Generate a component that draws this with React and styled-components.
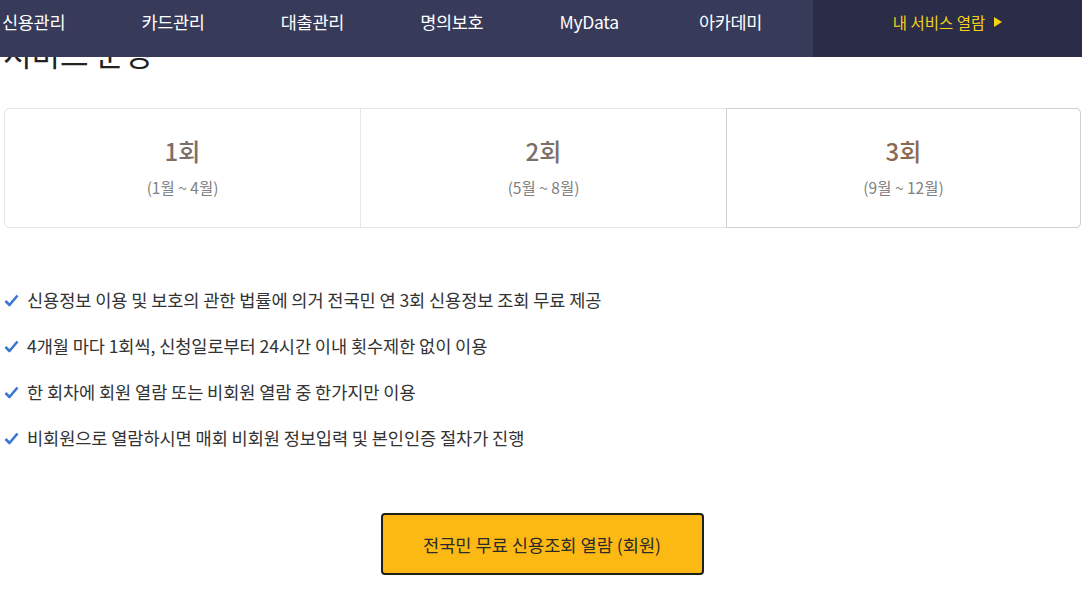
import React from "react";
import styled, { createGlobalStyle } from "styled-components";

const Global = createGlobalStyle`
  html, body { margin: 0; padding: 0; background: #fff; }
  body { font-family: "Noto Sans CJK KR", "Noto Sans", sans-serif; color: #333; }
  * { box-sizing: border-box; }
`;

const Header = styled.header`
  position: fixed;
  top: 0;
  left: 0;
  right: 0;
  height: 57px;
  display: flex;
  background: #383a5a;
  z-index: 10;
`;

const Nav = styled.nav`
  flex: 1;
  display: grid;
  grid-template-columns: repeat(5, 139.4px) 1fr;
  align-items: start;
  padding-left: 2px;
`;

const NavItem = styled.a`
  display: block;
  margin-top: 10px;
  color: #fff;
  font-size: 17.5px;
  letter-spacing: -0.3px;
  line-height: 24px;
  white-space: nowrap;
  text-decoration: none;
`;

const MyService = styled.a`
  width: 269px;
  display: flex;
  align-items: center;
  justify-content: center;
  gap: 9px;
  background: #2a2c48;
  color: #f6d21c;
  font-size: 15.5px;
  padding-bottom: 14px;
  text-decoration: none;
`;

const Triangle = styled.span`
  width: 0;
  height: 0;
  border-top: 5px solid transparent;
  border-bottom: 5px solid transparent;
  border-left: 8px solid #f6d21c;
  margin-top: 1px;
`;

const Main = styled.main`
  padding: 36px 1px 0 4px;
`;

const Title = styled.h2`
  margin: 0 0 0 -1px;
  font-size: 31px;
  font-weight: 400;
  line-height: 34px;
  color: #222;
`;

const Tabs = styled.div`
  margin-top: 38px;
  display: grid;
  grid-template-columns: 355px 366px 1fr;
  border: 1px solid #e6e6e6;
  border-radius: 5px;
  height: 120px;
`;

const Tab = styled.div`
  display: flex;
  flex-direction: column;
  align-items: center;
  justify-content: center;
  gap: 11px;
  padding-bottom: 4px;
  border-left: ${(p) => (p.$first ? "none" : "1px solid #e6e6e6")};
  ${(p) =>
    p.$active &&
    `
    margin: -1px -1px -1px 0;
    border: 1px solid #cfcfcf;
    border-radius: 0 5px 5px 0;
  `}
`;

const TabTitle = styled.div`
  font-size: 24px;
  font-weight: 500;
  line-height: 30px;
  color: ${(p) => (p.$active ? "#8a6a4e" : "#7b6f69")};
`;

const TabSub = styled.div`
  font-size: 15.5px;
  line-height: 20px;
  color: #7f7f7f;
`;

const List = styled.ul`
  list-style: none;
  margin: 60px 0 0;
  padding: 0;
  display: flex;
  flex-direction: column;
  gap: 22px;
`;

const Item = styled.li`
  display: flex;
  align-items: center;
  gap: 8px;
  font-size: 17.6px;
  line-height: 24px;
  color: #333;
  letter-spacing: -0.1px;
`;

const Check = () => (
  <svg width="15" height="13" viewBox="0 0 15 13" aria-hidden="true">
    <path d="M1.5 7 L5.5 11 L13.5 1.5" fill="none" stroke="#3b77d0" strokeWidth="2.6" strokeLinejoin="round" />
  </svg>
);

const ButtonRow = styled.div`
  display: flex;
  justify-content: center;
  margin-top: 63px;
  padding-right: 1px;
`;

const OpenButton = styled.button`
  width: 323px;
  height: 62px;
  background: #fdb913;
  border: 2px solid #1e1e1e;
  border-radius: 4px;
  font-family: inherit;
  font-size: 17.6px;
  color: #2b2b2b;
  cursor: pointer;
`;

const navItems = ["신용관리", "카드관리", "대출관리", "명의보호", "MyData", "아카데미"];
const tabs = [
  { t: "1회", s: "(1월 ~ 4월)" },
  { t: "2회", s: "(5월 ~ 8월)" },
  { t: "3회", s: "(9월 ~ 12월)", active: true },
];
const items = [
  "신용정보 이용 및 보호의 관한 법률에 의거 전국민 연 3회 신용정보 조회 무료 제공",
  "4개월 마다 1회씩, 신청일로부터 24시간 이내 횟수제한 없이 이용",
  "한 회차에 회원 열람 또는 비회원 열람 중 한가지만 이용",
  "비회원으로 열람하시면 매회 비회원 정보입력 및 본인인증 절차가 진행",
];

export default function App() {
  return (
    <>
      <Global />
      <Header>
        <Nav>
          {navItems.map((n) => (
            <NavItem key={n}>{n}</NavItem>
          ))}
        </Nav>
        <MyService>
          내 서비스 열람 <Triangle />
        </MyService>
      </Header>
      <Main>
        <Title>서비스 운영</Title>
        <Tabs>
          {tabs.map((tab, i) => (
            <Tab key={tab.t} $first={i === 0} $active={tab.active}>
              <TabTitle $active={tab.active}>{tab.t}</TabTitle>
              <TabSub>{tab.s}</TabSub>
            </Tab>
          ))}
        </Tabs>
        <List>
          {items.map((it) => (
            <Item key={it}>
              <Check />
              {it}
            </Item>
          ))}
        </List>
        <ButtonRow>
          <OpenButton>전국민 무료 신용조회 열람 (회원)</OpenButton>
        </ButtonRow>
      </Main>
    </>
  );
}
